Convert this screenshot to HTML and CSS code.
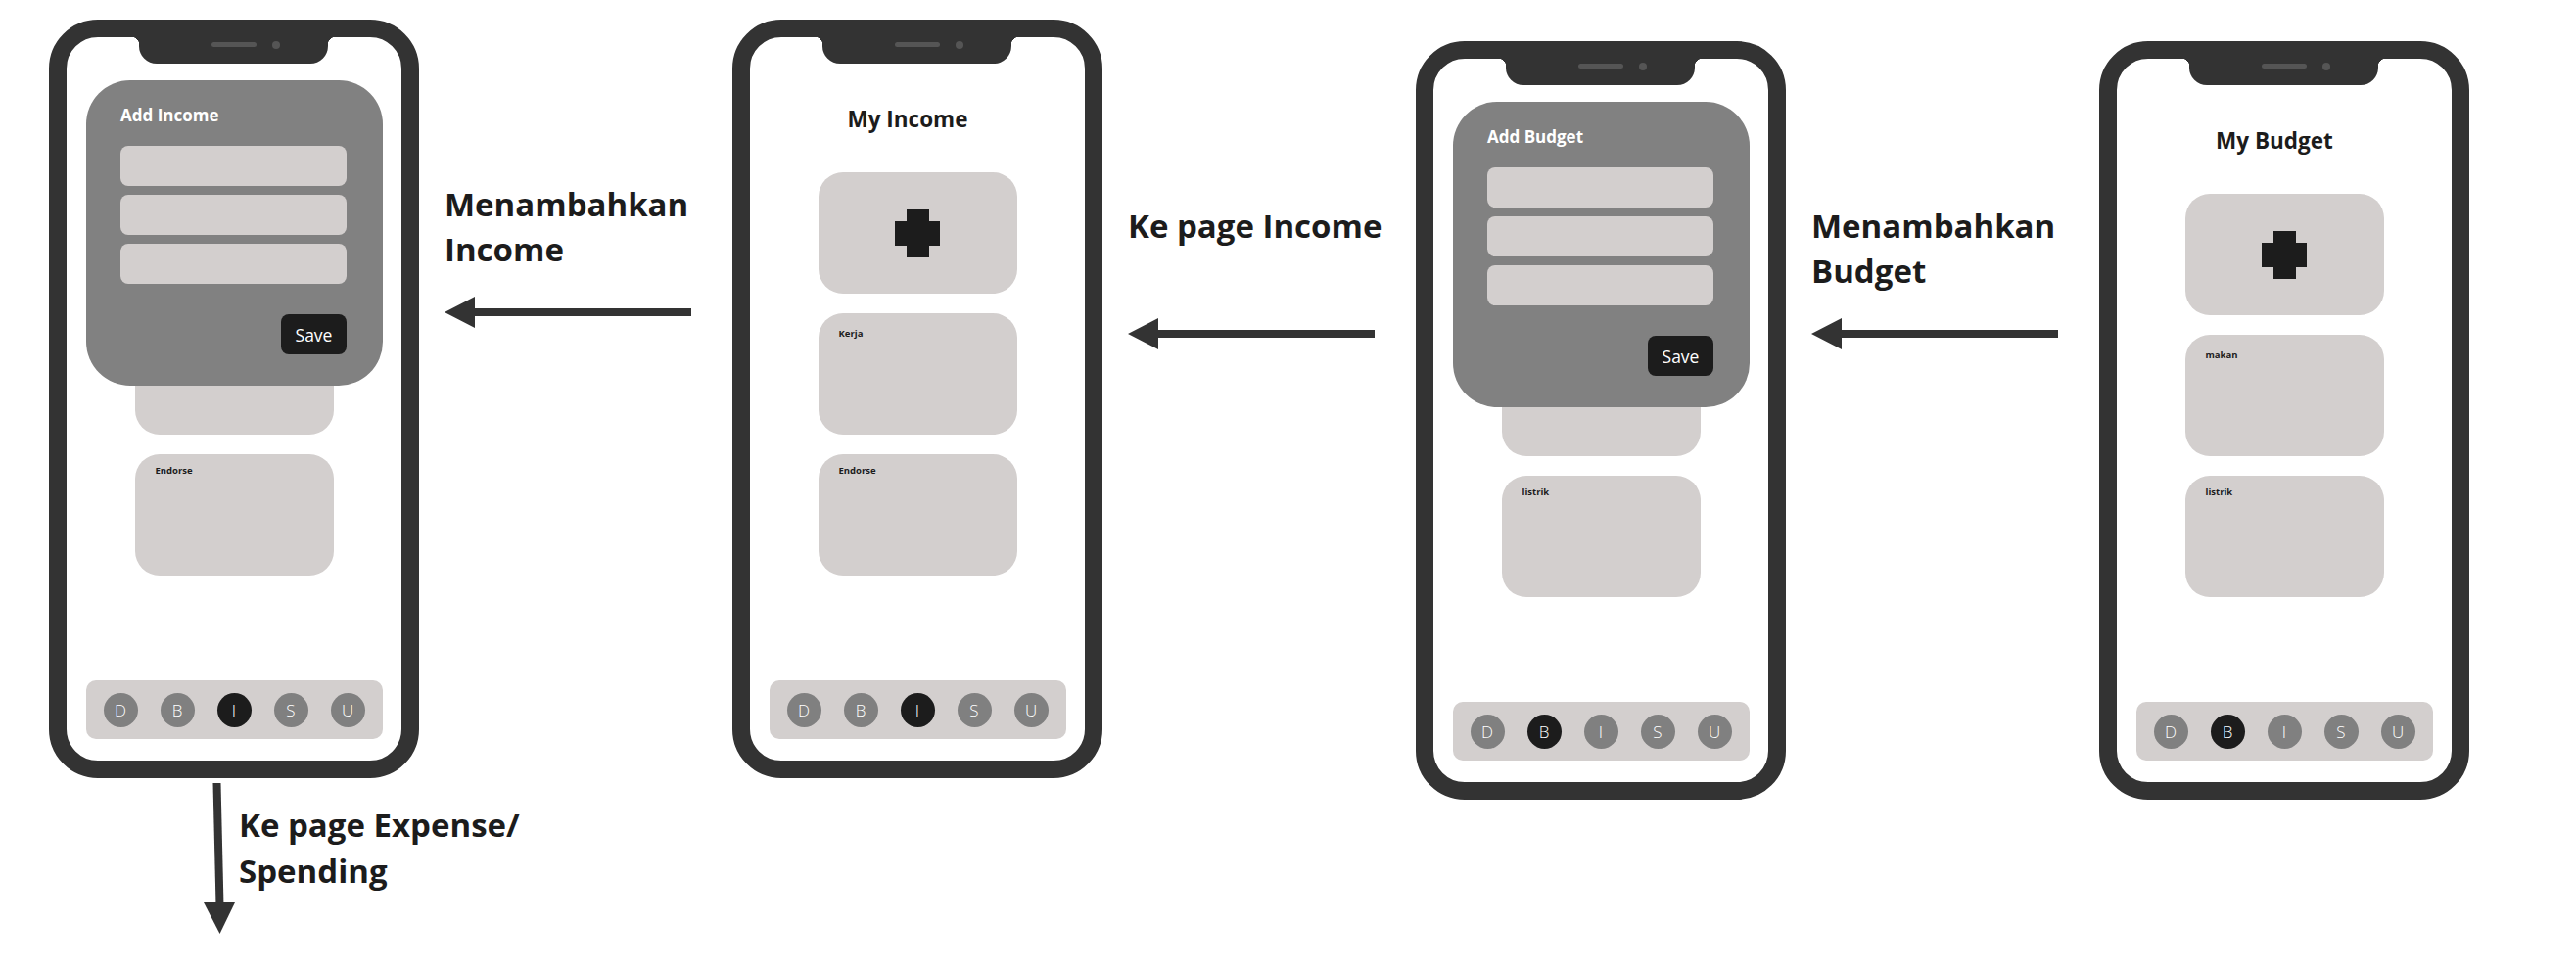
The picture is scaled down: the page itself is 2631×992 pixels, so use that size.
FILE: index.html
```html
<!DOCTYPE html>
<html lang="en">
<head>
    <meta charset="UTF-8">
    <meta name="viewport" content="width=device-width, initial-scale=1.0">
    <title>Budget App Flow</title>
    <link rel="stylesheet" href="styles.css">
</head>
<body>
    <main class="flow">
        <!-- Add Income -->
        <section class="step">
            <div class="phone-col">
                <div class="phone">
                    <div class="notch"><span class="speaker"></span><span class="camera"></span></div>
                    <div class="screen">
                        <h2 class="screen-title covered">My Income</h2>
                        <div class="cards">
                            <div class="card card-add"></div>
                            <div class="card"><span class="card-label covered">Kerja</span></div>
                            <div class="card"><span class="card-label">Endorse</span></div>
                        </div>
                        <nav class="tabbar">
                            <span class="tab">D</span>
                            <span class="tab">B</span>
                            <span class="tab active">I</span>
                            <span class="tab">S</span>
                            <span class="tab">U</span>
                        </nav>
                        <form class="sheet">
                            <h3 class="sheet-title">Add Income</h3>
                            <div class="fields">
                                <input class="field" type="text">
                                <input class="field" type="text">
                                <input class="field" type="text">
                            </div>
                            <button class="save" type="button">Save</button>
                        </form>
                    </div>
                </div>
                <div class="exit">
                    <svg class="arrow-down" width="32" height="154" viewBox="0 0 32 154">
                        <path d="M13.5 0 L16.5 125" stroke="#333" stroke-width="8" fill="none"/>
                        <polygon points="0,122 32,122 16.5,154" fill="#333"/>
                    </svg>
                    <p class="note">Ke page Expense/<br>Spending</p>
                </div>
            </div>
        </section>

        <!-- My Income -->
        <section class="step">
            <div class="connector">
                <p class="note">Menambahkan<br>Income</p>
                <svg class="arrow-left" width="252" height="32" viewBox="0 0 252 32">
                    <rect x="28" y="12" width="224" height="8" fill="#333"/>
                    <polygon points="0,16 31,0 31,32" fill="#333"/>
                </svg>
            </div>
            <div class="phone">
                <div class="notch"><span class="speaker"></span><span class="camera"></span></div>
                <div class="screen">
                    <h2 class="screen-title">My Income</h2>
                    <div class="cards">
                        <div class="card card-add">
                            <svg width="46" height="49" viewBox="0 0 46 49"><path d="M12 0H35V12H46V37H35V49H12V37H0V12H12Z" fill="#1c1c1c"/></svg>
                        </div>
                        <div class="card"><span class="card-label">Kerja</span></div>
                        <div class="card"><span class="card-label">Endorse</span></div>
                    </div>
                    <nav class="tabbar">
                        <span class="tab">D</span>
                        <span class="tab">B</span>
                        <span class="tab active">I</span>
                        <span class="tab">S</span>
                        <span class="tab">U</span>
                    </nav>
                </div>
            </div>
        </section>

        <!-- Add Budget -->
        <section class="step step-low">
            <div class="connector">
                <p class="note">Ke page Income</p>
                <svg class="arrow-left" width="252" height="32" viewBox="0 0 252 32">
                    <rect x="28" y="12" width="224" height="8" fill="#333"/>
                    <polygon points="0,16 31,0 31,32" fill="#333"/>
                </svg>
            </div>
            <div class="phone">
                <div class="notch"><span class="speaker"></span><span class="camera"></span></div>
                <div class="screen">
                    <h2 class="screen-title covered">My Budget</h2>
                    <div class="cards">
                        <div class="card card-add"></div>
                        <div class="card"><span class="card-label covered">makan</span></div>
                        <div class="card"><span class="card-label">listrik</span></div>
                    </div>
                    <nav class="tabbar">
                        <span class="tab">D</span>
                        <span class="tab active">B</span>
                        <span class="tab">I</span>
                        <span class="tab">S</span>
                        <span class="tab">U</span>
                    </nav>
                    <form class="sheet">
                        <h3 class="sheet-title">Add Budget</h3>
                        <div class="fields">
                            <input class="field" type="text">
                            <input class="field" type="text">
                            <input class="field" type="text">
                        </div>
                        <button class="save" type="button">Save</button>
                    </form>
                </div>
            </div>
        </section>

        <!-- My Budget -->
        <section class="step step-low">
            <div class="connector">
                <p class="note">Menambahkan<br>Budget</p>
                <svg class="arrow-left" width="252" height="32" viewBox="0 0 252 32">
                    <rect x="28" y="12" width="224" height="8" fill="#333"/>
                    <polygon points="0,16 31,0 31,32" fill="#333"/>
                </svg>
            </div>
            <div class="phone">
                <div class="notch"><span class="speaker"></span><span class="camera"></span></div>
                <div class="screen">
                    <h2 class="screen-title">My Budget</h2>
                    <div class="cards">
                        <div class="card card-add">
                            <svg width="46" height="49" viewBox="0 0 46 49"><path d="M12 0H35V12H46V37H35V49H12V37H0V12H12Z" fill="#1c1c1c"/></svg>
                        </div>
                        <div class="card"><span class="card-label">makan</span></div>
                        <div class="card"><span class="card-label">listrik</span></div>
                    </div>
                    <nav class="tabbar">
                        <span class="tab">D</span>
                        <span class="tab active">B</span>
                        <span class="tab">I</span>
                        <span class="tab">S</span>
                        <span class="tab">U</span>
                    </nav>
                </div>
            </div>
        </section>
    </main>
</body>
</html>
```

FILE: styles.css
```css
body {
    margin: 0;
    background-color: #fff;
    font-family: "Open Sans", "Noto Sans", sans-serif;
    color: #1c1c1c;
}
.flow {
    display: flex;
    align-items: flex-start;
    padding: 20px 0 0 50px;
}
.step {
    display: flex;
    align-items: flex-start;
}
.step-low {
    padding-top: 22px;
}
.phone-col {
    width: 378px;
}

/* connectors between screens */
.connector {
    width: 320px;
    box-sizing: border-box;
    padding: 166px 0 0 26px;
}
.note {
    margin: 0;
    font-size: 33px;
    line-height: 46px;
    font-weight: 700;
    white-space: nowrap;
}
.connector .note {
    min-height: 92px;
    margin-bottom: 25px;
}
.arrow-left,
.arrow-down {
    display: block;
    flex-shrink: 0;
}
.exit {
    display: flex;
    align-items: flex-start;
    gap: 4px;
    margin-top: 5px;
    padding-left: 158px;
}
.exit .note {
    padding-top: 19px;
    line-height: 47px;
}

/* phone frame */
.phone {
    position: relative;
    width: 378px;
    height: 775px;
    box-sizing: border-box;
    border: 18px solid #333;
    border-radius: 50px;
    background-color: #fff;
}
.notch {
    position: absolute;
    top: 0;
    left: 74px;
    z-index: 2;
    width: 193px;
    height: 27px;
    box-sizing: border-box;
    display: flex;
    align-items: flex-start;
    padding: 5px 0 0 74px;
    background-color: #333;
    border-radius: 0 0 18px 18px;
}
.notch::before,
.notch::after {
    content: "";
    position: absolute;
    top: 0;
    width: 8px;
    height: 8px;
}
.notch::before {
    left: -8px;
    background: radial-gradient(circle at 0 100%, transparent 8px, #333 8.5px);
}
.notch::after {
    right: -8px;
    background: radial-gradient(circle at 100% 100%, transparent 8px, #333 8.5px);
}
.speaker {
    width: 46px;
    height: 5px;
    border-radius: 3px;
    background-color: #555;
}
.camera {
    width: 8px;
    height: 8px;
    margin: -1.5px 0 0 16px;
    border-radius: 50%;
    background-color: #555;
}

/* screen content */
.screen {
    position: relative;
    height: 100%;
    box-sizing: border-box;
    display: flex;
    flex-direction: column;
    padding: 0 19.5px 22px;
    overflow: hidden;
    border-radius: 32px;
}
.screen-title {
    margin: 68px 20px 0 0;
    font-size: 22.5px;
    line-height: 32px;
    font-weight: 700;
    text-align: center;
}
.covered {
    visibility: hidden;
}
.cards {
    margin-top: 38px;
    display: flex;
    flex-direction: column;
    align-items: center;
    gap: 20px;
}
.card {
    width: 203px;
    height: 124px;
    box-sizing: border-box;
    padding: 14px 21px;
    border-radius: 25px;
    background-color: #d3cfce;
}
.card:last-child {
    padding-top: 10px;
}
.card-add {
    display: flex;
    align-items: center;
    justify-content: center;
    padding: 0;
}
.card-label {
    display: block;
    font-size: 9.5px;
    line-height: 14px;
    font-weight: 700;
}
.tabbar {
    margin-top: auto;
    height: 60px;
    box-sizing: border-box;
    display: flex;
    align-items: center;
    justify-content: space-between;
    padding: 0 18px;
    border-radius: 10px;
    background-color: #d3cfce;
}
.tab {
    width: 35px;
    height: 35px;
    display: flex;
    align-items: center;
    justify-content: center;
    border-radius: 50%;
    background-color: #808080;
    color: #fff;
    font-size: 17px;
    font-weight: 300;
}
.tab.active {
    background-color: #1c1c1c;
}

/* add form sheet */
.sheet {
    position: absolute;
    top: 44px;
    left: 20px;
    width: 303px;
    height: 312px;
    box-sizing: border-box;
    display: flex;
    flex-direction: column;
    padding: 24px 37px 32px 35px;
    border-radius: 45px;
    background-color: #818181;
}
.sheet-title {
    margin: 0;
    font-size: 17px;
    line-height: 24px;
    font-weight: 700;
    color: #fff;
}
.fields {
    margin-top: 19px;
    display: flex;
    flex-direction: column;
    gap: 9px;
}
.field {
    height: 41px;
    box-sizing: border-box;
    border: 0;
    border-radius: 8px;
    background-color: #d3cfce;
}
.save {
    align-self: flex-end;
    margin-top: auto;
    width: 67px;
    height: 41px;
    border: 0;
    border-radius: 8px;
    background-color: #1c1c1c;
    color: #fff;
    font-family: "Open Sans", sans-serif;
    font-size: 17.5px;
}
```
